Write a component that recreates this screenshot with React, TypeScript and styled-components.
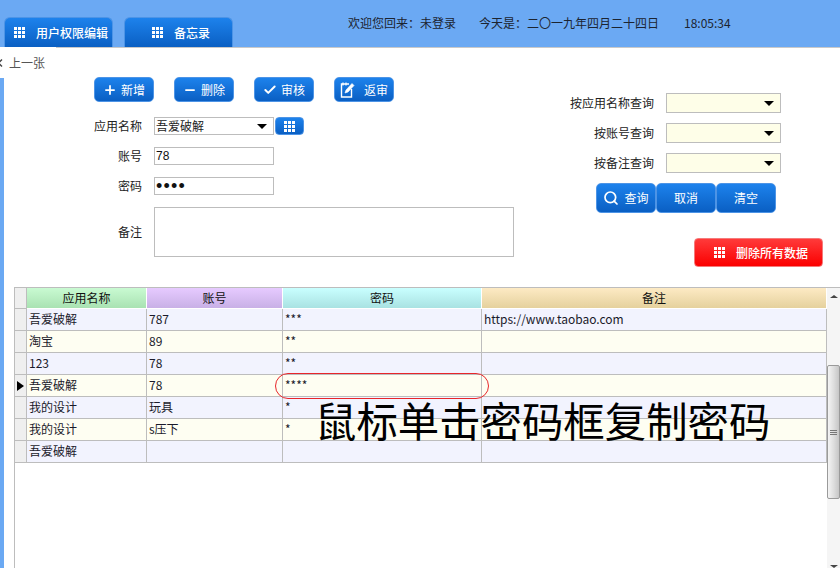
import * as React from "react";
import styled, { createGlobalStyle } from "styled-components";
import { Check, Minus, Plus, Search } from "lucide-react";

const GlobalStyle = createGlobalStyle`
	html, body {
		margin: 0;
		padding: 0;
		background: #fff;
	}

	body {
		font: 12px "Noto Sans CJK SC", "Liberation Sans", sans-serif;
		color: #222;
	}
`;

const blueGradient = "linear-gradient(#1d82ec, #0a5fc3)";

const Page = styled.div`
	width: 840px;
	height: 568px;
	overflow: hidden;
	display: flex;
	flex-direction: column;
	position: relative;
	line-height: 16px;
`;

const TopBar = styled.div`
	height: 47px;
	flex: none;
	background: #6ba9f3;
	display: flex;
	align-items: flex-end;
	padding-left: 4px;
	box-sizing: border-box;
`;

const Tab = styled.div`
	width: 109px;
	height: 30px;
	margin-right: 11px;
	box-sizing: border-box;
	display: flex;
	align-items: center;
	padding: 0 0 0 ${(p: { $pad: number }) => p.$pad}px;
	gap: 11px;
	color: #fff;
	font-weight: 500;
	background: ${blueGradient};
	border: 1px solid #4d94e6;
	border-bottom: none;
	border-radius: 6px 6px 0 0;
`;

const Status = styled.div`
	display: flex;
	align-self: flex-start;
	margin: 15px 0 0 ${(p: { $left: number }) => p.$left}px;
	color: #1c2430;
`;

const PrevRow = styled.div`
	height: 30px;
	flex: none;
	box-sizing: border-box;
	border-top: 1px solid #c9c9c9;
	display: flex;
`;

const PrevLink = styled.div`
	width: 56px;
	height: 31px;
	margin-top: -1px;
	background: #fff;
	display: flex;
	align-items: center;
	color: #555;
	padding-left: 9px;
	box-sizing: border-box;
	position: relative;
	font-size: 12px;
`;

const PrevChevron = styled.svg`
	position: absolute;
	left: -3px;
	top: 12px;
`;

const Body = styled.div`
	flex: 1;
	display: flex;
	min-height: 0;
`;

const Stripe = styled.div`
	width: 4px;
	flex: none;
	background: #6ba9f3;
	margin-top: 1px;
`;

const Content = styled.div`
	flex: 1;
	display: flex;
	flex-direction: column;
	min-width: 0;
`;

const TopSection = styled.div`
	height: 210px;
	flex: none;
	display: flex;
	padding-left: 90px;
`;

const FormColumn = styled.div`
	width: 420px;
	flex: none;
	display: flex;
	flex-direction: column;
`;

const Actions = styled.div`
	display: flex;
	gap: 20px;
	margin-bottom: 15px;
`;

const BlueButton = styled.div`
	width: ${(p: { $w?: number; $h?: number; $gap?: number }) => p.$w ?? 60}px;
	height: ${(p: { $w?: number; $h?: number; $gap?: number }) => p.$h ?? 25}px;
	box-sizing: border-box;
	display: flex;
	align-items: center;
	justify-content: center;
	gap: ${(p: { $w?: number; $h?: number; $gap?: number }) => p.$gap ?? 4}px;
	color: #fff;
	background: ${blueGradient};
	border: 1px solid #4d94e6;
	border-radius: 5px;
`;

const FormRow = styled.div`
	display: grid;
	grid-template-columns: 48px auto;
	column-gap: 12px;
	justify-content: start;
	align-items: center;
	margin-bottom: ${(p: { $gap: number }) => p.$gap}px;
`;

const FieldLabel = styled.label`
	text-align: right;
	color: #222;
`;

const FieldGroup = styled.div`
	display: flex;
	align-items: center;
`;

const Combo = styled.div`
	width: ${(p: { $w: number; $h: number; $bg: string }) => p.$w}px;
	height: ${(p: { $w: number; $h: number; $bg: string }) => p.$h}px;
	background: ${(p: { $w: number; $h: number; $bg: string }) => p.$bg};
	box-sizing: border-box;
	border: 1px solid #bdbdbd;
	display: flex;
	align-items: center;
	justify-content: space-between;
	padding: 0 6px 0 1px;
`;

const Caret = styled.span`
	width: 0;
	height: 0;
	border-left: 5px solid transparent;
	border-right: 5px solid transparent;
	border-top: 5px solid #000;
`;

const MiniButton = styled(BlueButton)`
	width: 29px;
	height: 18px;
	border-radius: 4px;
	margin-left: 1px;
`;

const TextField = styled.input`
	width: 120px;
	height: 18px;
	box-sizing: border-box;
	border: 1px solid #bdbdbd;
	padding: 0 1px;
	outline: none;
	color: #111;
	font: 12px "Liberation Sans", sans-serif;
`;

const PasswordField = styled(TextField)`
	font-size: 18px;
	letter-spacing: 1.2px;
`;

const NotesField = styled.textarea`
	width: 360px;
	height: 50px;
	box-sizing: border-box;
	border: 1px solid #bdbdbd;
	outline: none;
	resize: none;
	display: block;
`;

const QueryColumn = styled.div`
	width: 253px;
	margin-left: 56px;
	padding-top: 16px;
	flex: none;
	display: flex;
	flex-direction: column;
`;

const QueryGrid = styled.div`
	display: grid;
	grid-template-columns: 84px 115px;
	column-gap: 12px;
	row-gap: 10px;
	align-items: center;
`;

const QueryLabel = styled.span`
	text-align: right;
`;

const QueryButtons = styled.div`
	display: flex;
	margin: 10px 0 0 26px;
`;

const DangerButton = styled.div`
	width: 129px;
	height: 29px;
	margin: 25px 0 0 auto;
	box-sizing: border-box;
	display: flex;
	align-items: center;
	justify-content: center;
	gap: 11px;
	padding-left: 5px;
	color: #fff;
	font-weight: 500;
	background: linear-gradient(#ff3a3a, #fb0000);
	border: 1px solid #f57a7a;
	border-radius: 4px;
`;

const GridWrap = styled.div`
	flex: 1;
	min-height: 0;
	margin-left: 10px;
	border-top: 1px solid #bdbdbd;
	display: flex;
	position: relative;
`;

const Table = styled.div`
	width: 813px;
	flex: none;
	box-sizing: border-box;
	border-left: 1px solid #bdbdbd;
	display: flex;
	flex-direction: column;
`;

const columns = "12px 120px 136px 199px 345px";

const HeadRow = styled.div`
	display: grid;
	grid-template-columns: ${columns};
	height: 21px;
`;

const HeadCorner = styled.div`
	background: #efefef;
	border-right: 1px solid #bdbdbd;
	border-bottom: 1px solid #bdbdbd;
`;

const HeadCell = styled.div<{ $from: string; $to: string }>`
	background: linear-gradient(${(p) => p.$from}, ${(p) => p.$to});
	border-right: 1px solid #fff;
	border-bottom: 1px solid #fff;
	display: flex;
	align-items: center;
	justify-content: center;
	color: #111;
`;

const Row = styled.div<{ $odd: boolean }>`
	display: grid;
	grid-template-columns: ${columns};
	height: 22px;
	background: ${(p) => (p.$odd ? "#f2f3fe" : "#fefef2")};
`;

const RowMarker = styled.div`
	background: #efefef;
	border-right: 1px solid #bdbdbd;
	border-bottom: 1px solid #bdbdbd;
	display: flex;
	align-items: center;
	justify-content: flex-end;
	padding-right: 2px;
`;

const MarkerArrow = styled.span`
	width: 0;
	height: 0;
	border-top: 5px solid transparent;
	border-bottom: 5px solid transparent;
	border-left: 7px solid #000;
`;

const Cell = styled.div`
	border-right: 1px solid #bdbdbd;
	border-bottom: 1px solid #bdbdbd;
	padding: 0 2px 2px;
	display: flex;
	align-items: center;
	color: #1a1a2a;
	white-space: nowrap;
	overflow: hidden;
`;

const Scrollbar = styled.div`
	flex: 1;
	background: #f5f5f5;
	display: flex;
	flex-direction: column;
	align-items: center;
	position: relative;
`;

const ScrollArrow = styled.span<{ $down?: boolean }>`
	position: absolute;
	${(p) => (p.$down ? "bottom: 0;" : "top: 7px;")}
	width: 0;
	height: 0;
	border-left: 4px solid transparent;
	border-right: 4px solid transparent;
	${(p) => (p.$down ? "border-top: 3px solid #444;" : "border-bottom: 3px solid #444;")}
`;

const ScrollThumb = styled.div`
	position: absolute;
	top: 77px;
	left: 0;
	width: 13px;
	height: 134px;
	box-sizing: border-box;
	border: 1px solid #9a9a9a;
	border-radius: 2px;
	background: linear-gradient(90deg, #f4f4f4, #dcdcdc 55%, #c6c6c6);
	display: flex;
	flex-direction: column;
	align-items: center;
	justify-content: center;
	gap: 1px;
`;

const Grip = styled.span`
	width: 7px;
	height: 1px;
	background: #777;
`;

const Highlight = styled.div`
	position: absolute;
	left: 261px;
	top: 85px;
	width: 214px;
	height: 26px;
	box-sizing: border-box;
	border: 1.5px solid #e8262a;
	border-radius: 13px;
`;

const Caption = styled.div`
	position: absolute;
	left: 301px;
	top: 105px;
	font-size: 41.4px;
	line-height: 52px;
	color: #000;
	white-space: nowrap;
`;

function GridIcon({ size = 11 }: { size?: number }) {
	const cell = (size - 2) / 3;
	const spots = [0, 1, 2].flatMap((y) => [0, 1, 2].map((x) => [x, y]));
	return (
		<svg width={size} height={size} viewBox={`0 0 ${size} ${size}`} fill="#fff">
			{spots.map(([x, y]) => (
				<rect key={`${x}-${y}`} x={x * (cell + 1)} y={y * (cell + 1)} width={cell} height={cell} />
			))}
		</svg>
	);
}

function EditIcon() {
	return (
		<svg width="16" height="17" viewBox="0 0 16 17" fill="none" stroke="#fff">
			<path d="M9 3H1.5v13h10V8" strokeWidth="1.4" />
			<path d="M3 1.5v3M6 1.5v3" strokeWidth="1.2" />
			<path d="M5 12l1-3 6-6.5 2 2L8 11z" fill="#fff" strokeWidth="0.6" />
		</svg>
	);
}

const rows = [
	["吾爱破解", "787", "***", "https://www.taobao.com"],
	["淘宝", "89", "**", ""],
	["123", "78", "**", ""],
	["吾爱破解", "78", "****", ""],
	["我的设计", "玩具", "*", ""],
	["我的设计", "s压下", "*", ""],
	["吾爱破解", "", "", ""]
];

const heads = [
	{ label: "应用名称", from: "#c9fad2", to: "#a9e2b2" },
	{ label: "账号", from: "#e6caff", to: "#c8b0e6" },
	{ label: "密码", from: "#c9ffff", to: "#a9e2e2" },
	{ label: "备注", from: "#fdeac4", to: "#e5d19d" }
];

const queries = ["按应用名称查询", "按账号查询", "按备注查询"];

function App() {
	return (
		<Page>
			<GlobalStyle />
			<TopBar>
				<Tab $pad={9}>
					<GridIcon />
					用户权限编辑
				</Tab>
				<Tab $pad={27}>
					<GridIcon />
					备忘录
				</Tab>
				<Status $left={104}>欢迎您回来：未登录</Status>
				<Status $left={23}>今天是：二〇一九年四月二十四日</Status>
				<Status $left={25}>18:05:34</Status>
			</TopBar>
			<PrevRow>
				<PrevLink>
					<PrevChevron width="6" height="8" viewBox="0 0 6 8" fill="none" stroke="#444" strokeWidth="1.4">
						<path d="M5 0.5L1.5 4L5 7.5" />
					</PrevChevron>
					上一张
				</PrevLink>
			</PrevRow>
			<Body>
				<Stripe />
				<Content>
					<TopSection>
						<FormColumn>
							<Actions>
								<BlueButton>
									<Plus size={14} strokeWidth={3} />
									新增
								</BlueButton>
								<BlueButton>
									<Minus size={14} strokeWidth={3} />
									删除
								</BlueButton>
								<BlueButton>
									<Check size={14} strokeWidth={3.4} />
									审核
								</BlueButton>
								<BlueButton $gap={8}>
									<EditIcon />
									返审
								</BlueButton>
							</Actions>
							<FormRow $gap={12}>
								<FieldLabel>应用名称</FieldLabel>
								<FieldGroup>
									<Combo $w={120} $h={18} $bg="#fff">
										吾爱破解
										<Caret />
									</Combo>
									<MiniButton>
										<GridIcon />
									</MiniButton>
								</FieldGroup>
							</FormRow>
							<FormRow $gap={12}>
								<FieldLabel>账号</FieldLabel>
								<TextField readOnly value="78" />
							</FormRow>
							<FormRow $gap={12}>
								<FieldLabel>密码</FieldLabel>
								<PasswordField readOnly type="password" value="7878" />
							</FormRow>
							<FormRow $gap={0}>
								<FieldLabel>备注</FieldLabel>
								<NotesField readOnly value="" />
							</FormRow>
						</FormColumn>
						<QueryColumn>
							<QueryGrid>
								{queries.map((q) => (
									<React.Fragment key={q}>
										<QueryLabel>{q}</QueryLabel>
										<Combo $w={115} $h={20} $bg="#fefee8">
											<span />
											<Caret />
										</Combo>
									</React.Fragment>
								))}
							</QueryGrid>
							<QueryButtons>
								<BlueButton $h={30} $gap={5}>
									<Search size={16} strokeWidth={2.6} />
									查询
								</BlueButton>
								<BlueButton $h={30}>取消</BlueButton>
								<BlueButton $h={30}>清空</BlueButton>
							</QueryButtons>
							<DangerButton>
								<GridIcon />
								删除所有数据
							</DangerButton>
						</QueryColumn>
					</TopSection>
					<GridWrap>
						<Table>
							<HeadRow>
								<HeadCorner />
								{heads.map((h) => (
									<HeadCell key={h.label} $from={h.from} $to={h.to}>
										{h.label}
									</HeadCell>
								))}
							</HeadRow>
							{rows.map((row, i) => (
								<Row key={i} $odd={i % 2 === 0}>
									<RowMarker>{i === 3 && <MarkerArrow />}</RowMarker>
									{row.map((text, j) => (
										<Cell key={j}>{text}</Cell>
									))}
								</Row>
							))}
						</Table>
						<Scrollbar>
							<ScrollArrow />
							<ScrollThumb>
								<Grip />
								<Grip />
								<Grip />
							</ScrollThumb>
							<ScrollArrow $down />
						</Scrollbar>
						<Highlight />
						<Caption>鼠标单击密码框复制密码</Caption>
					</GridWrap>
				</Content>
			</Body>
		</Page>
	);
}

export default App;
